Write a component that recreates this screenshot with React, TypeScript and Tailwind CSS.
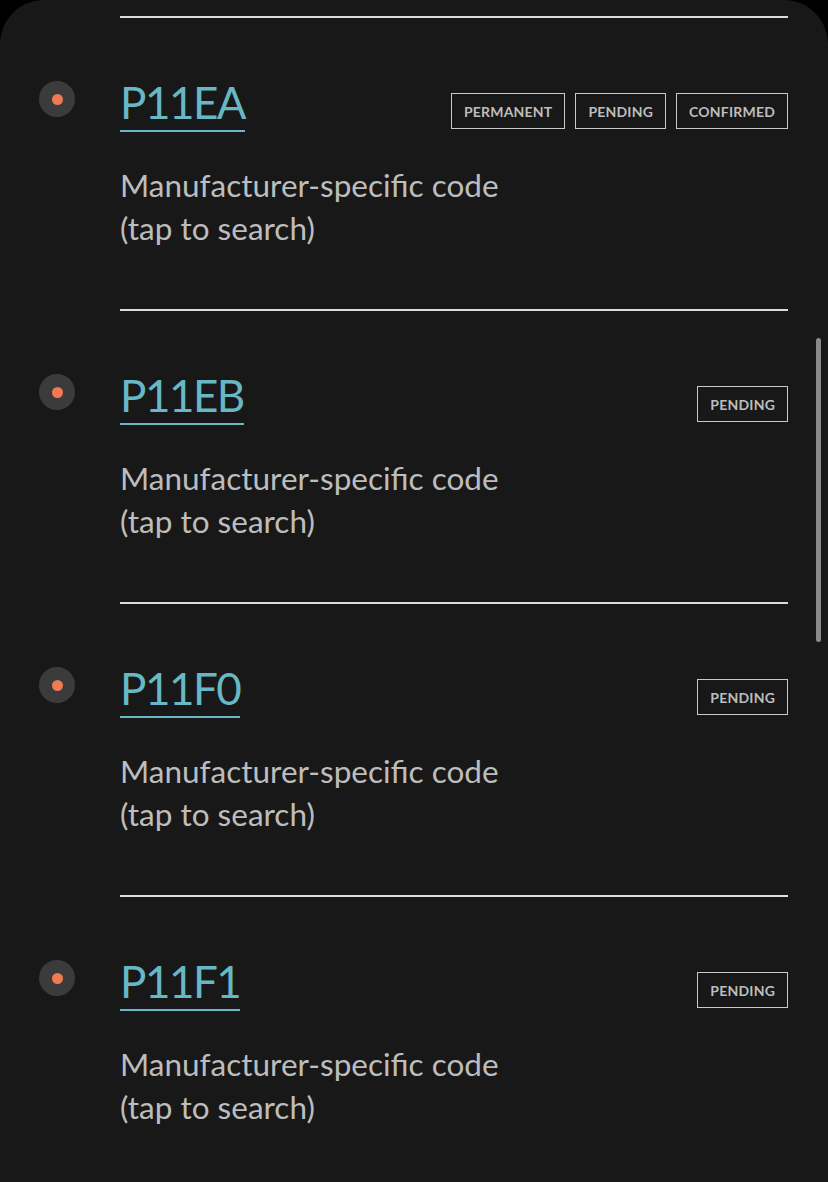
import React from "react";

type Code = { code: string; tags: string[] };

const codes: Code[] = [
  { code: "P11EA", tags: ["PERMANENT", "PENDING", "CONFIRMED"] },
  { code: "P11EB", tags: ["PENDING"] },
  { code: "P11F0", tags: ["PENDING"] },
  { code: "P11F1", tags: ["PENDING"] },
];

function Row({ item }: { item: Code }) {
  return (
    <div className="flex">
      <div className="w-[120px] shrink-0 flex justify-center">
        <div className="mt-[63px] ml-[-6px] w-9 h-9 rounded-full bg-[#3b3b3b] flex items-center justify-center">
          <div className="w-[11px] h-[11px] rounded-full bg-[#f07a52]" />
        </div>
      </div>
      <div className="flex-1 pr-10">
        <div className="pt-[58px] flex items-start justify-between">
          <span className="text-[44px] leading-[52px] text-[#67b7c5] border-b-2 border-[#67b7c5] pb-[2px] tracking-[-1.5px]">
            {item.code}
          </span>
          <div className="flex gap-[10px] mt-[17px]">
            {item.tags.map((t) => (
              <span
                key={t}
                className="h-9 px-3 border border-[#c9c9c9] flex items-center text-[14px] font-bold text-[#bdbdbd] tracking-[0.2px]"
              >
                {t}
              </span>
            ))}
          </div>
        </div>
        <p className="mt-[32px] text-[31.5px] leading-[43px] text-[#bdbdbd]">
          Manufacturer-specific code
          <br />
          (tap to search)
        </p>
        <div className="mt-[59px] h-[2px] bg-[#dcdcdc]" />
      </div>
    </div>
  );
}

export default function App() {
  return (
    <div className="w-[828px] h-[1182px] bg-black overflow-hidden" style={{ fontFamily: "Lato, 'Noto Sans', sans-serif" }}>
      <div className="relative h-full bg-[#181818] rounded-t-[44px]">
        <div className="pt-[16px] pl-[120px] pr-10">
          <div className="h-[2px] bg-[#dcdcdc]" />
        </div>
        {codes.map((c) => (
          <Row key={c.code} item={c} />
        ))}
        {/* scrollbar */}
        <div className="absolute right-[7px] top-[338px] w-[5px] h-[304px] rounded-full bg-[#8a8a8a]" />
      </div>
    </div>
  );
}
